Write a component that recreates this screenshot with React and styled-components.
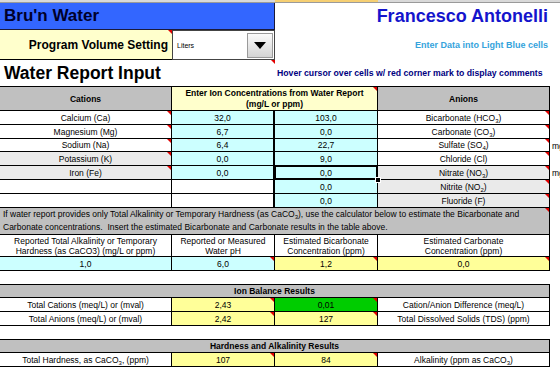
import React from 'react';
import styled, { createGlobalStyle, css } from 'styled-components';

const Global = createGlobalStyle`
  *, *::before, *::after { box-sizing: border-box; }
  html, body { margin: 0; padding: 0; background: #fff; overflow: hidden; }
  body { font-family: "Liberation Sans", Arial, sans-serif; color: #000; }
`;

const COLS = '172px 103px 103px 172px 10px';

const Page = styled.div`
  width: 560px;
  height: 370px;
  overflow: hidden;
`;

const TopStrip = styled.div`
  display: grid;
  grid-template-columns: 275px 103px 1fr;
  height: 3px;
`;

const StripSeg = styled.div`
  background: ${p => p.$bg};
  border-bottom: 1px solid #9a9a9a;
`;

const Banner = styled.div`
  display: grid;
  grid-template-columns: 172px 103px 1fr;
  grid-template-rows: 27px 30px 26px;
`;

const markCss = css`
  &::after {
    content: '';
    position: absolute;
    top: 0;
    right: 0;
    border-top: 4px solid #e00000;
    border-left: 4px solid transparent;
  }
`;

const Title = styled.div`
  grid-column: span 2;
  background: #3366ff;
  color: #00002a;
  font-weight: 700;
  font-size: 17px;
  display: flex;
  align-items: center;
  padding-left: 4px;
  border-bottom: 1px solid #1a1a3a;
  border-right: 1px solid #1a1a3a;
`;

const Owner = styled.div`
  display: flex;
  align-items: center;
  justify-content: flex-end;
  padding-right: 12px;
  font-size: 18px;
  font-weight: 700;
  color: #1414cc;
`;

const SettingLabel = styled.div`
  position: relative;
  background: #ffffcc;
  font-size: 12px;
  font-weight: 700;
  display: flex;
  align-items: center;
  justify-content: flex-end;
  padding-right: 4px;
  border-bottom: 1px solid #000;
  ${markCss}
`;

const Dropdown = styled.div`
  display: flex;
  align-items: center;
  justify-content: space-between;
  background: #fff;
  border: 1px solid #444;
  padding: 0 1px 0 4px;
  font-size: 7px;
`;

const DropButton = styled.div`
  width: 26px;
  height: 25px;
  background: linear-gradient(#fbfbfb, #d4d4d4);
  border: 1px solid #9a9a9a;
  display: flex;
  align-items: center;
  justify-content: center;
`;

const Hint = styled.div`
  display: flex;
  align-items: center;
  justify-content: flex-end;
  padding-right: 12px;
  font-size: 9px;
  font-weight: 700;
  color: #35a3dc;
`;

const Heading = styled.div`
  position: relative;
  grid-column: span 2;
  display: flex;
  align-items: center;
  padding-left: 4px;
  font-size: 17.5px;
  font-weight: 700;
  ${markCss}
`;

const HoverNote = styled.div`
  display: flex;
  align-items: center;
  padding-left: 2px;
  font-size: 8.7px;
  font-weight: 700;
  color: #000080;
  white-space: nowrap;
`;

const Row = styled.div`
  display: grid;
  grid-template-columns: ${COLS};
  height: ${p => p.$h}px;
`;

const CellBox = styled.div`
  position: relative;
  display: flex;
  align-items: center;
  justify-content: ${p => (p.$left ? 'flex-start' : 'center')};
  text-align: ${p => (p.$left ? 'left' : 'center')};
  padding: ${p => (p.$left ? '0 3px' : '0 2px')};
  grid-column: span ${p => p.$span || 1};
  background: ${p => p.$bg || '#fff'};
  border-right: ${p => (p.$thick ? 2 : 1)}px solid #000;
  border-bottom: 1px solid #000;
  border-top: ${p => (p.$top ? '1px solid #000' : 'none')};
  font-size: 8.5px;
  line-height: ${p => (p.$lh ? `${p.$lh}px` : 'normal')};
  font-weight: ${p => (p.$bold ? 700 : 400)};
  white-space: ${p => (p.$wrap ? 'normal' : 'nowrap')};
  ${p => p.$mark && markCss}
  ${p =>
    p.$selected &&
    css`
      box-shadow: inset 0 0 0 1px #000;
      &::before {
        content: '';
        position: absolute;
        right: -4px;
        bottom: -4px;
        width: 6px;
        height: 6px;
        background: #000;
        border: 1px solid #fff;
        z-index: 2;
      }
    `}
`;

const CellText = styled.span`
  display: block;
`;

function Cell({ children, ...rest }) {
  return (
    <CellBox {...rest}>
      <CellText>{children}</CellText>
    </CellBox>
  );
}

const Side = styled.div`
  display: flex;
  align-items: center;
  padding-left: 2px;
  font-size: 8.5px;
  white-space: nowrap;
  overflow: hidden;
`;

const Blank = styled.div`
  grid-column: span 5;
`;

const Sub = styled.sub`
  font-size: 6px;
  vertical-align: -2px;
  line-height: 0;
`;

const CYAN = '#ccffff';
const YELLOW = '#ffff99';
const PALE = '#ffffcc';
const GRAY = '#c0c0c0';
const LIGHT = '#eaeaea';
const GREEN = '#00cc00';

const ions = [
  { h: 14, cat: 'Calcium (Ca)', cv: '32,0', av: '103,0', an: <>Bicarbonate (HCO<Sub>3</Sub>)</> },
  { h: 14, cat: 'Magnesium (Mg)', cv: '6,7', av: '0,0', an: <>Carbonate (CO<Sub>3</Sub>)</> },
  { h: 13, cat: 'Sodium (Na)', cv: '6,4', av: '22,7', an: <>Sulfate (SO<Sub>4</Sub>)</>, side: 'mg/L' },
  { h: 14, cat: 'Potassium (K)', cv: '0,0', av: '9,0', an: 'Chloride (Cl)', catGray: true },
  { h: 14, cat: 'Iron (Fe)', cv: '0,0', av: '0,0', an: <>Nitrate (NO<Sub>3</Sub>)</>, catGray: true, anGray: true, selected: true, side: 'mg/L' },
  { h: 14, av: '0,0', an: <>Nitrite (NO<Sub>2</Sub>)</>, anGray: true },
  { h: 14, av: '0,0', an: 'Fluoride (F)', anGray: true },
];

function Arrow() {
  return (
    <svg width="12" height="7" viewBox="0 0 12 7">
      <path d="M0 0 H12 L6 7 Z" fill="#000" />
    </svg>
  );
}

export default function App() {
  return (
    <Page>
      <Global />
      <TopStrip>
        <StripSeg $bg="#d9d9d9" />
        <StripSeg $bg="#f6cf72" />
        <StripSeg $bg="#d9d9d9" />
      </TopStrip>
      <Banner>
        <Title>Bru'n Water</Title>
        <Owner>Francesco Antonelli</Owner>
        <SettingLabel>Program Volume Setting</SettingLabel>
        <Dropdown>
          <span>Liters</span>
          <DropButton>
            <Arrow />
          </DropButton>
        </Dropdown>
        <Hint>Enter Data into Light Blue cells</Hint>
        <Heading>Water Report Input</Heading>
        <HoverNote>Hover cursor over cells w/ red corner mark to display comments</HoverNote>
      </Banner>

      <Row $h={25}>
        <Cell $bg={GRAY} $bold $top>Cations</Cell>
        <Cell $bg={PALE} $bold $top $span={2} $wrap $lh={11} $mark>
          Enter Ion Concentrations from Water Report
          <br />
          (mg/L or ppm)
        </Cell>
        <Cell $bg={GRAY} $bold $top>Anions</Cell>
        <Side />
      </Row>

      {ions.map((r, i) => (
        <Row $h={r.h} key={i}>
          <Cell $bg={r.catGray ? LIGHT : '#fff'} $mark={!!r.cat}>{r.cat}</Cell>
          <Cell $bg={r.cv ? CYAN : '#fff'} $thick>{r.cv}</Cell>
          <Cell $bg={CYAN} $selected={r.selected}>{r.av}</Cell>
          <Cell $bg={r.anGray ? LIGHT : '#fff'} $mark>{r.an}</Cell>
          <Side>{r.side}</Side>
        </Row>
      ))}

      <Row $h={27}>
        <Cell $bg={GRAY} $span={4} $left $wrap $lh={13} $mark>
          If water report provides only Total Alkalinity or Temporary Hardness (as CaCO<Sub>3</Sub>), use the calculator below to estimate the Bicarbonate and
          <br />
          Carbonate concentrations.&nbsp; Insert the estimated Bicarbonate and Carbonate results in the table above.
        </Cell>
        <Side />
      </Row>

      <Row $h={22}>
        <Cell $wrap $lh={10}>Reported Total Alkalinity or Temporary<br />Hardness (as CaCO3) (mg/L or ppm)</Cell>
        <Cell $wrap $lh={10}>Reported or Measured<br />Water pH</Cell>
        <Cell $wrap $lh={10}>Estimated Bicarbonate<br />Concentration (ppm)</Cell>
        <Cell $wrap $lh={10}>Estimated Carbonate<br />Concentration (ppm)</Cell>
        <Side />
      </Row>

      <Row $h={14}>
        <Cell $bg={CYAN}>1,0</Cell>
        <Cell $bg={CYAN} $mark>6,0</Cell>
        <Cell $bg={YELLOW} $mark>1,2</Cell>
        <Cell $bg={YELLOW} $mark>0,0</Cell>
        <Side />
      </Row>

      <Row $h={13}><Blank /></Row>

      <Row $h={14}>
        <Cell $bg={GRAY} $span={4} $bold $top>Ion Balance Results</Cell>
        <Side />
      </Row>
      <Row $h={14}>
        <Cell>Total Cations (meq/L) or (mval)</Cell>
        <Cell $bg={YELLOW} $mark>2,43</Cell>
        <Cell $bg={GREEN} $mark>0,01</Cell>
        <Cell>Cation/Anion Difference (meq/L)</Cell>
        <Side />
      </Row>
      <Row $h={14}>
        <Cell>Total Anions (meq/L) or (mval)</Cell>
        <Cell $bg={YELLOW} $mark>2,42</Cell>
        <Cell $bg={YELLOW} $mark>127</Cell>
        <Cell>Total Dissolved Solids (TDS) (ppm)</Cell>
        <Side />
      </Row>

      <Row $h={13}><Blank /></Row>

      <Row $h={14}>
        <Cell $bg={GRAY} $span={4} $bold $top>Hardness and Alkalinity Results</Cell>
        <Side />
      </Row>
      <Row $h={14}>
        <Cell>Total Hardness, as CaCO<Sub>3</Sub>, (ppm)</Cell>
        <Cell $bg={YELLOW} $mark>107</Cell>
        <Cell $bg={YELLOW} $mark>84</Cell>
        <Cell>Alkalinity (ppm as CaCO<Sub>3</Sub>)</Cell>
        <Side />
      </Row>
    </Page>
  );
}
